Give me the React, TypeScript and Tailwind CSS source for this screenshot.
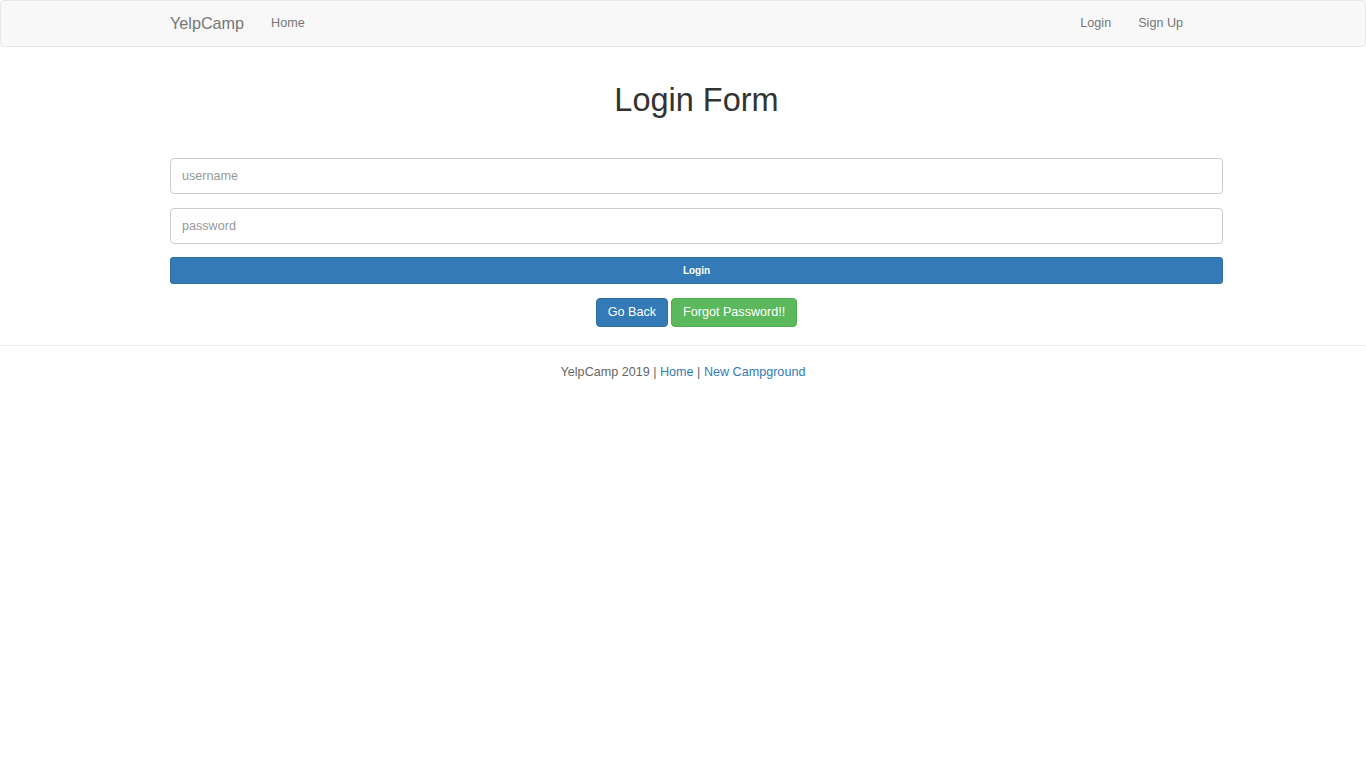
export default function App() {
    return (
        <div className="min-h-screen bg-white text-[12.6px] text-[#333]" style={{ fontFamily: '"Liberation Sans", Arial, sans-serif' }}>
            {/* navbar */}
            <nav className="h-[47px] pb-[1px] bg-[#f8f8f8] border border-[#e7e7e7] rounded-[4px] flex items-center">
                <div className="ml-[169px] flex items-center">
                    <a className="text-[16.2px] text-[#777] leading-[20px]">YelpCamp</a>
                    <a className="ml-[27px] text-[#777] leading-[20px]">Home</a>
                </div>
                <div className="ml-auto mr-[182px] flex items-center gap-[27px]">
                    <a className="text-[#777] leading-[20px]">Login</a>
                    <a className="text-[#777] leading-[20px]">Sign Up</a>
                </div>
            </nav>

            <div className="ml-[170px] w-[1053px]">
                <h1 className="text-center text-[32.5px] leading-[40px] text-[#333] mt-[33px] mb-[38px]">Login Form</h1>
                <form className="flex flex-col">
                    <input
                        placeholder="username"
                        className="h-[36px] border border-[#ccc] rounded-[4px] px-[11px] text-[12.6px] placeholder:text-[#999] outline-none mb-[14px]"
                    />
                    <input
                        type="password"
                        placeholder="password"
                        className="h-[36px] border border-[#ccc] rounded-[4px] px-[11px] text-[12.6px] placeholder:text-[#999] outline-none mb-[13px]"
                    />
                    <button type="button" className="h-[27px] bg-[#337ab7] border border-[#2e6da4] rounded-[3px] text-white text-[10px] font-bold">
                        Login
                    </button>
                </form>
                <div className="flex justify-center gap-[3px] mt-[14px]">
                    <button className="h-[29px] px-[11px] bg-[#337ab7] border border-[#2e6da4] rounded-[4px] text-white text-[12.6px]">Go Back</button>
                    <button className="h-[29px] px-[11px] bg-[#5cb85c] border border-[#4cae4c] rounded-[4px] text-white text-[12.6px]">Forgot Password!!</button>
                </div>
            </div>

            <hr className="mt-[18px] border-t border-[#eee]" />
            <p className="text-center mt-[17px] text-[#666] leading-[18px]">
                YelpCamp 2019 | <a className="text-[#337ab7]">Home</a> | <a className="text-[#337ab7]">New Campground</a>
            </p>
        </div>
    );
}
